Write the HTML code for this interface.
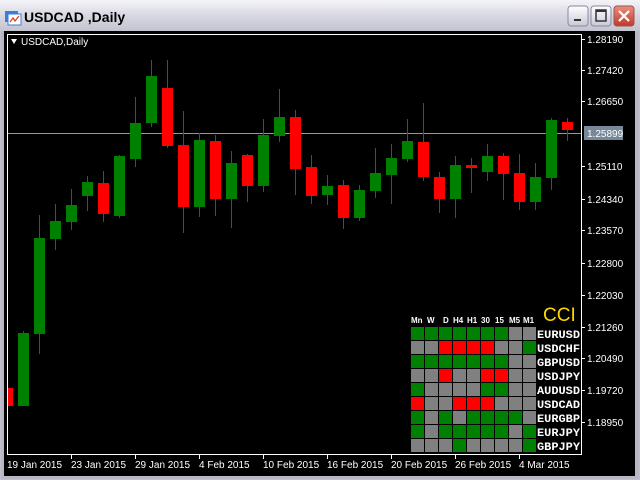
<!DOCTYPE html>
<html><head><meta charset="utf-8"><style>
html,body{margin:0;padding:0;width:640px;height:480px;overflow:hidden;background:#d4d0c8}
</style></head><body>
<svg width="640" height="480" xmlns="http://www.w3.org/2000/svg" style="display:block" font-family="Liberation Sans, sans-serif">
<defs><linearGradient id="tb" x1="0" y1="0" x2="0" y2="1"><stop offset="0" stop-color="#f4f4f8"/><stop offset="0.5" stop-color="#d8d8e2"/><stop offset="1" stop-color="#c4c4d0"/></linearGradient>
<linearGradient id="bt" x1="0" y1="0" x2="0" y2="1"><stop offset="0" stop-color="#ffffff"/><stop offset="1" stop-color="#c8c8d8"/></linearGradient>
<linearGradient id="cl" x1="0" y1="0" x2="0" y2="1"><stop offset="0" stop-color="#e89080"/><stop offset="1" stop-color="#c03a28"/></linearGradient>
<rect id="G" width="13" height="13" fill="#008000"/><rect id="g" width="13" height="13" fill="#808080"/><rect id="R" width="13" height="13" fill="#ff0000"/></defs>
<rect x="0" y="0" width="640" height="480" fill="#c0c0cc"/>
<rect x="0" y="0" width="640" height="31" fill="url(#tb)"/>
<rect x="1" y="31" width="638" height="448" fill="#b8b8c4"/>
<rect x="5" y="11" width="13" height="11" fill="#3a7ed8"/><rect x="8" y="14" width="13" height="11" fill="#fff" stroke="#3a7ed8"/>
<polyline points="10,22 13,18 15,21 19,16" fill="none" stroke="#e04020" stroke-width="1.3"/>
<text x="24" y="22" font-size="14" font-weight="bold" fill="#000">USDCAD ,Daily</text>
<rect x="568" y="6" width="20" height="20" rx="3" fill="url(#bt)" stroke="#8888a0"/><rect x="574" y="19" width="7" height="2" fill="#333"/>
<rect x="591" y="6" width="20" height="20" rx="3" fill="url(#bt)" stroke="#8888a0"/><rect x="596" y="10" width="10" height="11" fill="none" stroke="#333" stroke-width="1.5"/><rect x="596" y="10" width="10" height="2" fill="#333"/>
<rect x="614" y="6" width="20" height="20" rx="3" fill="url(#cl)" stroke="#a05050"/><path d="M619 11 L629 21 M629 11 L619 21" stroke="#fff" stroke-width="2.2"/>
<rect x="4" y="31" width="631" height="445" fill="#000"/>
<rect x="7.5" y="34.5" width="574" height="420" fill="none" stroke="#fff"/>
<line x1="8" y1="133.5" x2="581" y2="133.5" stroke="#8e97a0"/>
<path d="M11 39 L17 39 L14 44 Z" fill="#fff"/>
<text x="21" y="45" font-size="10" fill="#fff">USDCAD,Daily</text>
<g stroke-width="1">
<line x1="23.5" y1="331" x2="23.5" y2="406" stroke="#008000"/>
<line x1="39.5" y1="215" x2="39.5" y2="354" stroke="#008000"/>
<line x1="55.5" y1="204" x2="55.5" y2="250" stroke="#008000"/>
<line x1="71.5" y1="189" x2="71.5" y2="230" stroke="#008000"/>
<line x1="87.5" y1="176" x2="87.5" y2="211" stroke="#008000"/>
<line x1="103.5" y1="171" x2="103.5" y2="222" stroke="#f00"/>
<line x1="119.5" y1="155" x2="119.5" y2="218" stroke="#008000"/>
<line x1="135.5" y1="97" x2="135.5" y2="167" stroke="#008000"/>
<line x1="151.5" y1="60" x2="151.5" y2="127" stroke="#008000"/>
<line x1="167.5" y1="60" x2="167.5" y2="148" stroke="#f00"/>
<line x1="183.5" y1="111" x2="183.5" y2="233" stroke="#f00"/>
<line x1="199.5" y1="133" x2="199.5" y2="217" stroke="#008000"/>
<line x1="215.5" y1="135" x2="215.5" y2="216" stroke="#f00"/>
<line x1="231.5" y1="151" x2="231.5" y2="228" stroke="#008000"/>
<line x1="247.5" y1="154" x2="247.5" y2="202" stroke="#f00"/>
<line x1="263.5" y1="119" x2="263.5" y2="192" stroke="#008000"/>
<line x1="279.5" y1="89" x2="279.5" y2="142" stroke="#008000"/>
<line x1="295.5" y1="110" x2="295.5" y2="195" stroke="#f00"/>
<line x1="311.5" y1="155" x2="311.5" y2="204" stroke="#f00"/>
<line x1="327.5" y1="175" x2="327.5" y2="205" stroke="#008000"/>
<line x1="343.5" y1="180" x2="343.5" y2="229" stroke="#f00"/>
<line x1="359.5" y1="185" x2="359.5" y2="221" stroke="#008000"/>
<line x1="375.5" y1="148" x2="375.5" y2="198" stroke="#008000"/>
<line x1="391.5" y1="144" x2="391.5" y2="204" stroke="#008000"/>
<line x1="407.5" y1="119" x2="407.5" y2="162" stroke="#008000"/>
<line x1="423.5" y1="103" x2="423.5" y2="181" stroke="#f00"/>
<line x1="439.5" y1="172" x2="439.5" y2="213" stroke="#f00"/>
<line x1="455.5" y1="156" x2="455.5" y2="218" stroke="#008000"/>
<line x1="471.5" y1="158" x2="471.5" y2="193" stroke="#f00"/>
<line x1="487.5" y1="144" x2="487.5" y2="181" stroke="#008000"/>
<line x1="503.5" y1="153" x2="503.5" y2="200" stroke="#f00"/>
<line x1="519.5" y1="154" x2="519.5" y2="210" stroke="#f00"/>
<line x1="535.5" y1="163" x2="535.5" y2="210" stroke="#008000"/>
<line x1="551.5" y1="118" x2="551.5" y2="190" stroke="#008000"/>
<line x1="567.5" y1="118" x2="567.5" y2="141" stroke="#f00"/>
</g>
<rect x="8" y="388" width="5" height="18" fill="#f00"/>
<rect x="18" y="333" width="11" height="73" fill="#008000"/>
<rect x="34" y="238" width="11" height="96" fill="#008000"/>
<rect x="50" y="221" width="11" height="18" fill="#008000"/>
<rect x="66" y="205" width="11" height="17" fill="#008000"/>
<rect x="82" y="182" width="11" height="14" fill="#008000"/>
<rect x="98" y="183" width="11" height="31" fill="#f00"/>
<rect x="114" y="156" width="11" height="60" fill="#008000"/>
<rect x="130" y="123" width="11" height="36" fill="#008000"/>
<rect x="146" y="76" width="11" height="47" fill="#008000"/>
<rect x="162" y="88" width="11" height="58" fill="#f00"/>
<rect x="178" y="145" width="11" height="62" fill="#f00"/>
<rect x="194" y="140" width="11" height="67" fill="#008000"/>
<rect x="210" y="141" width="11" height="58" fill="#f00"/>
<rect x="226" y="163" width="11" height="36" fill="#008000"/>
<rect x="242" y="155" width="11" height="31" fill="#f00"/>
<rect x="258" y="135" width="11" height="51" fill="#008000"/>
<rect x="274" y="117" width="11" height="19" fill="#008000"/>
<rect x="290" y="117" width="11" height="52" fill="#f00"/>
<rect x="306" y="167" width="11" height="29" fill="#f00"/>
<rect x="322" y="186" width="11" height="9" fill="#008000"/>
<rect x="338" y="185" width="11" height="33" fill="#f00"/>
<rect x="354" y="190" width="11" height="28" fill="#008000"/>
<rect x="370" y="173" width="11" height="18" fill="#008000"/>
<rect x="386" y="158" width="11" height="17" fill="#008000"/>
<rect x="402" y="141" width="11" height="18" fill="#008000"/>
<rect x="418" y="142" width="11" height="35" fill="#f00"/>
<rect x="434" y="177" width="11" height="22" fill="#f00"/>
<rect x="450" y="165" width="11" height="34" fill="#008000"/>
<rect x="466" y="165" width="11" height="3" fill="#f00"/>
<rect x="482" y="156" width="11" height="16" fill="#008000"/>
<rect x="498" y="156" width="11" height="18" fill="#f00"/>
<rect x="514" y="173" width="11" height="29" fill="#f00"/>
<rect x="530" y="177" width="11" height="25" fill="#008000"/>
<rect x="546" y="120" width="11" height="58" fill="#008000"/>
<rect x="562" y="122" width="11" height="8" fill="#f00"/>
<g fill="#fff" font-size="10">
<g stroke="#fff"><line x1="581" y1="39.5" x2="585" y2="39.5"/><line x1="581" y1="70.5" x2="585" y2="70.5"/><line x1="581" y1="101.5" x2="585" y2="101.5"/><line x1="581" y1="166.5" x2="585" y2="166.5"/><line x1="581" y1="199.5" x2="585" y2="199.5"/><line x1="581" y1="230.5" x2="585" y2="230.5"/><line x1="581" y1="263.5" x2="585" y2="263.5"/><line x1="581" y1="295.5" x2="585" y2="295.5"/><line x1="581" y1="327.5" x2="585" y2="327.5"/><line x1="581" y1="358.5" x2="585" y2="358.5"/><line x1="581" y1="390.5" x2="585" y2="390.5"/><line x1="581" y1="422.5" x2="585" y2="422.5"/></g>
<text x="587" y="43">1.28190</text><text x="587" y="74">1.27420</text><text x="587" y="105">1.26650</text>
<text x="587" y="170">1.25110</text><text x="587" y="203">1.24340</text><text x="587" y="234">1.23570</text>
<text x="587" y="267">1.22800</text><text x="587" y="299">1.22030</text><text x="587" y="331">1.21260</text>
<text x="587" y="362">1.20490</text><text x="587" y="394">1.19720</text><text x="587" y="426">1.18950</text>
</g>
<rect x="584" y="126" width="39" height="14" fill="#778899"/>
<text x="587" y="137" font-size="10" fill="#fff">1.25899</text>
<g stroke="#fff"><line x1="71.5" y1="454" x2="71.5" y2="459"/><line x1="135.5" y1="454" x2="135.5" y2="459"/><line x1="199.5" y1="454" x2="199.5" y2="459"/><line x1="263.5" y1="454" x2="263.5" y2="459"/><line x1="327.5" y1="454" x2="327.5" y2="459"/><line x1="391.5" y1="454" x2="391.5" y2="459"/><line x1="455.5" y1="454" x2="455.5" y2="459"/><line x1="519.5" y1="454" x2="519.5" y2="459"/></g>
<g fill="#fff" font-size="10">
<text x="7" y="468">19 Jan 2015</text><text x="71" y="468">23 Jan 2015</text><text x="135" y="468">29 Jan 2015</text><text x="199" y="468">4 Feb 2015</text><text x="263" y="468">10 Feb 2015</text><text x="327" y="468">16 Feb 2015</text><text x="391" y="468">20 Feb 2015</text><text x="455" y="468">26 Feb 2015</text><text x="519" y="468">4 Mar 2015</text>
</g>
<text x="543" y="321" font-size="19" fill="#ffd700">CCI</text>
<g fill="#fff" font-size="8" font-weight="bold">
<text x="411" y="323">Mn</text><text x="427" y="323">W</text><text x="443" y="323">D</text><text x="453" y="323">H4</text><text x="467" y="323">H1</text><text x="481" y="323">30</text><text x="495" y="323">15</text><text x="509" y="323">M5</text><text x="523" y="323">M1</text>
</g>
<g transform="translate(411,327)">
<use href="#G" x="0"/><use href="#G" x="14"/><use href="#G" x="28"/><use href="#G" x="42"/><use href="#G" x="56"/><use href="#G" x="70"/><use href="#G" x="84"/><use href="#g" x="98"/><use href="#g" x="112"/>
</g>
<g transform="translate(411,341)">
<use href="#g" x="0"/><use href="#g" x="14"/><use href="#R" x="28"/><use href="#R" x="42"/><use href="#R" x="56"/><use href="#R" x="70"/><use href="#g" x="84"/><use href="#g" x="98"/><use href="#G" x="112"/>
</g>
<g transform="translate(411,355)">
<use href="#G" x="0"/><use href="#G" x="14"/><use href="#G" x="28"/><use href="#G" x="42"/><use href="#G" x="56"/><use href="#G" x="70"/><use href="#G" x="84"/><use href="#g" x="98"/><use href="#g" x="112"/>
</g>
<g transform="translate(411,369)">
<use href="#g" x="0"/><use href="#g" x="14"/><use href="#R" x="28"/><use href="#g" x="42"/><use href="#g" x="56"/><use href="#R" x="70"/><use href="#R" x="84"/><use href="#g" x="98"/><use href="#g" x="112"/>
</g>
<g transform="translate(411,383)">
<use href="#G" x="0"/><use href="#g" x="14"/><use href="#g" x="28"/><use href="#g" x="42"/><use href="#g" x="56"/><use href="#G" x="70"/><use href="#G" x="84"/><use href="#g" x="98"/><use href="#g" x="112"/>
</g>
<g transform="translate(411,397)">
<use href="#R" x="0"/><use href="#g" x="14"/><use href="#g" x="28"/><use href="#R" x="42"/><use href="#R" x="56"/><use href="#R" x="70"/><use href="#g" x="84"/><use href="#g" x="98"/><use href="#g" x="112"/>
</g>
<g transform="translate(411,411)">
<use href="#G" x="0"/><use href="#g" x="14"/><use href="#G" x="28"/><use href="#g" x="42"/><use href="#G" x="56"/><use href="#G" x="70"/><use href="#G" x="84"/><use href="#G" x="98"/><use href="#g" x="112"/>
</g>
<g transform="translate(411,425)">
<use href="#G" x="0"/><use href="#g" x="14"/><use href="#G" x="28"/><use href="#G" x="42"/><use href="#G" x="56"/><use href="#G" x="70"/><use href="#G" x="84"/><use href="#g" x="98"/><use href="#G" x="112"/>
</g>
<g transform="translate(411,439)">
<use href="#g" x="0"/><use href="#g" x="14"/><use href="#g" x="28"/><use href="#G" x="42"/><use href="#g" x="56"/><use href="#g" x="70"/><use href="#g" x="84"/><use href="#g" x="98"/><use href="#G" x="112"/>
</g>
<g font-family="Liberation Mono, monospace" font-size="11" fill="#fff" font-weight="bold">
<text x="537" y="338" textLength="43" lengthAdjust="spacingAndGlyphs">EURUSD</text>
<text x="537" y="352" textLength="43" lengthAdjust="spacingAndGlyphs">USDCHF</text>
<text x="537" y="366" textLength="43" lengthAdjust="spacingAndGlyphs">GBPUSD</text>
<text x="537" y="380" textLength="43" lengthAdjust="spacingAndGlyphs">USDJPY</text>
<text x="537" y="394" textLength="43" lengthAdjust="spacingAndGlyphs">AUDUSD</text>
<text x="537" y="408" textLength="43" lengthAdjust="spacingAndGlyphs">USDCAD</text>
<text x="537" y="422" textLength="43" lengthAdjust="spacingAndGlyphs">EURGBP</text>
<text x="537" y="436" textLength="43" lengthAdjust="spacingAndGlyphs">EURJPY</text>
<text x="537" y="450" textLength="43" lengthAdjust="spacingAndGlyphs">GBPJPY</text>
</g>
</svg>
</body></html>
